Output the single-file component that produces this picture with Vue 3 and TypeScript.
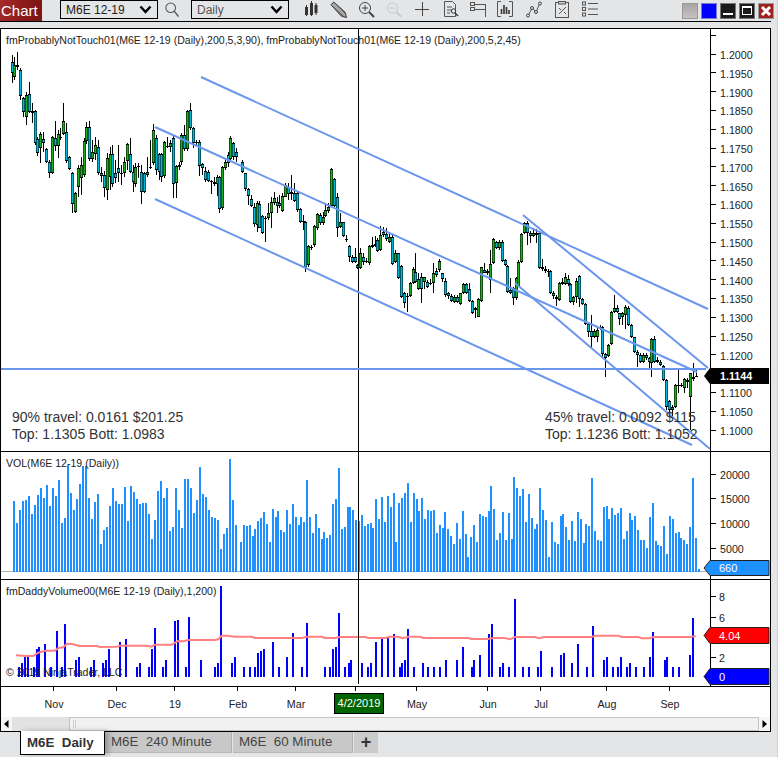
<script setup lang="ts">
type Candle = { x: number; t: number; b: number; c: string; hi: number; lo: number };

const seg1 = "40 35 68 c 15 100,46 45 80 g 22 90,55 46 52 c 5 60,64 60 137 c 55 150,73 145 185 c 140 200,82 135 200 g 125 225,91 132 185 c 95 190,100 182 188 g 160 218,109 182 278 c 180 285,115 268 308 c 260 318,124 252 295 g 245 340,133 268 278 c 245 305,142 298 335 c 295 340,151 335 368 c 330 385,160 262 368 g 258 372,169 265 288 c 213 302,178 252 288 g 240 325,184 262 265 c 235 270,193 213 252 g 158 255,202 247 332 c 220 340,211 320 356 c 318 360,220 370 463 c 365 490,229 430 487 g 425 490,238 355 410 g 345 440,247 345 385 g 320 435,256 272 375 g 265 380,262 230 272 g 215 282,271 232 328 c 212 332,280 305 328 g 270 335,289 285 312 g 260 330,298 292 368 c 270 375,307 368 378 c 352 395,316 375 415 c 362 440,325 325 420 g 310 450,334 313 380 g 290 420,340 313 403 c 285 410,349 368 385 c 330 400,358 355 370 c 285 395,367 370 373 c 345 405,376 337 368 g 320 380,385 283 332 g 280 360,394 313 365 c 265 370,403 365 395 c 345 425,409 350 403 g 340 410,418 347 352 g 340 385,427 365 425 c 345 463,436 370 425 c 365 430,445 367 376 g 320 380,454 350 353 c 270 358,463 240 340 g 222 345,472 265 360 c 255 375,481 313 365 c 310 390,487 313 382 c 310 395,496 277 378 g 272 385,505 288 291 g 260 295,514 280 290 g 270 305,523 265 403 c 255 445,532 348 400 g 345 445,541 345 350 g 335 360,547 255 337 g 250 345,556 255 298 c 225 302,565 183 298 g 180 302,574 180 235 c 160 240,583 235 278 c 232 295,592 275 278 g 270 285,601 275 348 c 270 378,610 343 355 c 340 375,619 362 390 c 352 395,628 365 392 c 360 395,637 393 396 c 390 432,646 395 403 g 380 408,655 380 403 g 375 438,661 380 478 c 378 490,670 350 475 g 348 480,679 335 355 g 325 360,688 315 340 c 305 350,694 265 327 g 258 330,703 280 320 c 275 330,712 305 320 c 295 335";
const seg2 = "9 5 35 c 0 40,18 40 88 c 38 92,27 88 107 c 85 135,36 118 137 c 105 140,45 142 193 c 130 200,54 130 195 g 122 215,60 132 205 c 122 205,69 168 218 c 165 222,78 175 178 g 168 245,87 160 175 g 130 180,96 127 160 g 110 203,105 115 130 g 97 135,114 127 137 c 110 160,120 130 138 c 105 145,129 107 152 g 100 155,138 75 110 g 70 112,147 80 102 c 68 120,156 97 103 g 45 120,165 100 122 c 70 125,174 100 150 c 95 155,183 147 185 c 145 190,192 182 186 g 165 210,198 185 325 c 182 335,207 258 315 g 255 320,216 260 265 g 255 270,225 198 255 g 195 260,234 162 205 g 158 210,243 165 190 c 158 195,252 170 188 g 155 195,258 150 168 g 130 172,267 140 152 g 130 160,276 28 138 g 25 140,285 58 138 c 55 140,294 112 205 c 100 230,303 187 200 g 160 205,312 187 227 c 185 230,321 238 241 c 225 245,330 258 290 c 255 305,339 290 305 c 285 310,348 290 305 c 265 310,354 315 325 c 312 328,363 280 325 g 265 328,372 290 305 c 280 315,381 303 307 g 295 310,390 258 310 g 255 315,399 255 262 g 232 265,408 252 258 g 228 262,414 240 272 c 235 275,423 225 270 g 198 272,432 215 225 c 200 230,441 222 238 c 205 242,450 232 247 g 215 250,459 232 312 c 225 315,468 278 305 g 270 308,477 280 355 c 278 358,486 317 412 c 315 415,495 398 430 c 395 445,504 408 412 c 400 455,513 370 408 g 365 412,522 327 370 g 322 372,528 335 365 c 280 370,537 357 387 g 340 390,546 352 387 c 338 430,555 352 365 g 350 388,564 365 382 c 360 385,573 368 372 g 358 375,582 338 370 g 310 400,591 332 346 c 325 350,600 303 330 g 298 335,609 340 358 c 338 365,618 362 405 c 355 410,627 400 408 c 395 418,636 408 422 c 402 425,645 412 425 g 405 428,654 412 425 c 405 428,663 400 432 g 398 435,672 372 400 g 368 402,681 372 398 c 368 402,690 388 422 c 370 425,699 422 460 c 420 462,708 445 450 c 440 475,717 418 470 g 415 472";
const seg3 = "36 172 272 g 170 275,45 180 188 c 160 190,54 183 190 g 178 195,63 162 210 g 120 248,72 88 160 g 85 162,81 97 115 c 92 118,90 95 115 g 90 120,99 97 152 c 90 155,108 150 165 c 148 168,114 168 245 c 165 248,123 240 248 c 205 252,132 235 265 c 230 285,141 205 265 g 200 270,147 155 228 g 150 232,156 72 155 g 68 158,165 38 68 g 35 72,174 38 70 c 32 105,183 68 78 c 62 100,192 70 78 g 55 82,201 70 75 c 58 100,210 70 175 c 68 178,219 172 178 g 148 182,228 178 182 g 168 190,237 182 185 c 178 200,243 182 250 c 180 252,252 250 258 c 242 268,261 262 268 c 255 288,270 218 270 g 215 272,279 215 222 g 205 225,288 200 222 g 190 225,297 208 222 c 195 228,303 222 275 c 220 278,312 262 275 g 258 285,321 212 262 g 205 280,330 198 268 c 195 290,339 268 282 c 265 285,348 282 342 c 280 345,357 342 365 c 340 380,366 362 382 c 315 410,375 362 382 g 358 385,384 360 382 g 355 395,393 350 355 g 345 360,400 350 432 c 348 445,409 432 445 c 430 500,418 405 437 g 402 440,427 305 403 g 302 405,436 295 305 g 255 310,445 293 305 c 285 308,451 310 327 c 308 345,460 310 320 g 305 345,469 290 315 g 285 358,478 293 345 c 288 348,487 345 382 c 343 385,496 382 425 c 380 428,505 425 435 c 420 472,514 435 455 c 430 458,523 435 455 g 430 460,532 435 445 c 430 450,541 445 455 c 440 475,546 388 460 g 385 500,555 388 455 c 378 458,564 450 455 g 440 458,573 455 465 c 450 468,582 468 510 c 465 512,591 510 590 c 508 600,600 572 600 c 570 618,609 590 600 g 585 620,618 525 592 g 522 595,627 525 528 g 480 548,636 525 528 c 520 532,645 508 533 g 505 548,654 510 515 c 505 535,663 490 560 g 488 660,672 500 507 c 460 512,681 497 500 g 480 500";

function parse(s: string, x0: number, y0: number): Candle[] {
  return s.split(",").map((p) => {
    const [x, t, b, c, hi, lo] = p.split(" ");
    const px = (v: string) => Math.round(y0 + Number(v) / 3);
    return { x: Math.round(x0 + Number(x) / 3) - 1, t: px(t), b: px(b), c, hi: px(hi), lo: px(lo) };
  });
}
const candles: Candle[] = [...parse(seg1, 0, 50), ...parse(seg2, 240, 160), ...parse(seg3, 470, 210)];

const priceTicks = Array.from({ length: 22 }, (_, i) => 34.7 + i * 18.8).map((y) => Math.round(y) + 0.5);
const priceLabels = Array.from({ length: 21 }, (_, i) => ({
  y: Math.round(54 + i * 18.8),
  text: (1.2 - i * 0.005).toFixed(4),
})).filter((p) => p.text !== "1.1150");

const lines = [
  [201, 77, 708, 309],
  [155, 127, 697, 372],
  [155, 199, 692, 445],
  [523, 215, 708, 368],
  [515, 283, 710, 449],
];

const volA = [153,219,180,153,150,138,192,165,135,114,144,105,168,114,138,90,219,204,45,129,180,147,102,48,48,144,207,156,132,282,240,231,168,114,153,162,162,111,213,108,126,147,162,159,159,192,267,210,123,93,144,114,243,231,114,180,234,87,87,114,189,150,51,132,141,180,201,204,210,297,252,234,27,150,225];
const volB = [261,210,213,210,243,222,198,189,171,207,261,162,186,168,225,231,165,207,147,186,210,186,201,75,186,234,177,219,252,231,249,240,147,132,39,222,216,156,156,165,195,198,180,213,207,204,219,132,192,126,201,123,156,114,261,144,129,114,84,201,114,132,168,129,192,165,168,165,234,210,219,171,222,243,267,204,252,168,237,306,246,210,261,177,183,186,168,93,162,255,234,171,255,174,252,66,99,123,102,201,117,189,222,207,99,165,195,306,201,261,267,183,177,216,255,198,258,171,192,264,207,213,69,228,255,258,156,153,192,159,180,174,159,252,228,174,195,183,225,255,255,279,186,144,258,270,273,213,297,183,192,234,231,249,255,267,216,69,249,342];
const volBars = [
  ...volA.map((t, i) => ({ x: 13 + i * 3, y: Math.round(450 + t / 3) })),
  ...volB.map((t, i) => ({ x: Math.round(240 + (i * 457.7) / (volB.length - 1)), y: Math.round(455 + t / 3) })),
];

const dA = "66:250,75:230,84:225,102:260,111:207,117:201,135:192,153:260,171:153,186:260,195:132,228:240,237:231,273:260,282:240,309:250,318:240,327:207,360:186,378:177,411:260,420:249,447:260,456:207,465:144,489:260,498:240,525:123,534:120,558:260,567:111,603:240,645:260,654:249,663:18,696:249,705:231,732:260,750:260,765:260,774:219,783:213,792:207,819:186,837:260,861:231,879:159,906:260,921:129,975:260,990:260,999:207,1008:201,1017:99,1035:260,1047:249,57:260";
const dB = "3:240,36:249,54:260,63:249,78:186,96:177,114:171,132:162,150:260,156:249,165:240,174:147,192:260,219:249,234:260,252:260,270:260,288:240,321:240,339:201,366:260,372:240,390:225,417:162,426:132,450:260,459:249,477:260,495:57,519:260,537:260,564:260,573:213,606:260,633:225,642:219,666:249,684:192,711:260,729:138,762:240,771:231,789:260,804:260,813:231,831:260,840:249,858:260,882:260,900:231,909:156,945:240,951:231,969:260,987:260,1020:225,1029:114";
function bars(s: string, x0: number) {
  return s.split(",").map((p) => {
    const [x, t] = p.split(":").map(Number);
    return { x: Math.round(x0 + x / 3) - 1, y: Math.round(580 + t / 3) };
  });
}
const dailyBars = [...bars(dA, 0), ...bars(dB, 350)];

const maA = "48,226 80,228 100,228 115,218 135,212 165,212 175,204 190,202 200,191 215,192 240,198 290,198 300,201 350,200 360,197 440,197 455,200 465,194 515,194 535,183 550,184 565,180 645,180 655,178 665,167 680,167 705,170 755,170 765,174 905,174 920,170 965,170 975,174 1005,174 1020,171 1050,171";
const maB = "45,171 55,174 105,174 120,170 145,170 158,175 175,170 210,170 220,174 355,174 365,177 415,177 430,174 465,174 480,178 495,171 555,171 567,175 582,171 725,171 735,167 805,167 815,171 865,171 875,175 900,175 910,171 1020,171 1037,168";
function pts(s: string, x0: number): string {
  return s.split(" ").map((p) => {
    const [x, y] = p.split(",").map(Number);
    return `${(x0 + x / 3).toFixed(1)},${(580 + y / 3).toFixed(1)}`;
  }).join(" ");
}
const maLine = pts(maA, 0) + " " + pts(maB, 350);

const months = [
  { x: 53, tx: 54, label: "Nov" },
  { x: 116, tx: 117, label: "Dec" },
  { x: 174, tx: 175, label: "19" },
  { x: 237, tx: 238, label: "Feb" },
  { x: 295, tx: 296, label: "Mar" },
  { x: 355, tx: -100, label: "" },
  { x: 416, tx: 417, label: "May" },
  { x: 487, tx: 488, label: "Jun" },
  { x: 540, tx: 541, label: "Jul" },
  { x: 606, tx: 607, label: "Aug" },
  { x: 669, tx: 670, label: "Sep" },
];
const volTicks = [
  { y: 474, t: "20000" },
  { y: 498, t: "15000" },
  { y: 523, t: "10000" },
  { y: 548, t: "5000" },
];
const dayTicks = [
  { y: 596, t: "8" },
  { y: 617, t: "6" },
  { y: 657, t: "2" },
];
function tag(y1: number, y2: number): string {
  const m = (y1 + y2) / 2;
  return `710,${y1} 769,${y1} 769,${y2} 710,${y2} 704,${m}`;
}
</script>

<template>
  <div class="app">
    <header class="toolbar">
      <div class="chart-tab">Chart</div>
      <div class="combo first"><span>M6E 12-19</span>
        <svg width="13" height="9" viewBox="0 0 13 9"><path d="M1.5 1.5 6.5 7 11.5 1.5" fill="none" stroke="#000" stroke-width="2.4" /></svg>
      </div>
      <svg class="ic search" width="14" height="15" viewBox="0 0 16 17"><circle cx="6.500" cy="6.500" r="5.500" fill="none" stroke="#555" stroke-width="1.200" /><path d="M10.500 10.500l5 6" stroke="#555" stroke-width="1.500" /></svg>
      <div class="combo second"><span>Daily</span>
        <svg width="13" height="9" viewBox="0 0 13 9"><path d="M1.5 1.5 6.5 7 11.5 1.5" fill="none" stroke="#000" stroke-width="2.4" /></svg>
      </div>
      <svg class="ic m15" width="14" height="18" viewBox="0 0 14 18"><path d="M2.500 5v11M7.500 1v15M12 3v12" stroke="#333" stroke-width="1" /><rect x="1" y="7" width="3" height="8" fill="#333" /><rect x="6" y="3" width="3" height="12" fill="#333" /><rect x="10.500" y="5" width="3" height="8" fill="#333" /></svg>
      <svg class="ic m12" width="17" height="17" viewBox="0 0 18 18"><path d="M1 4l3-3 12 11 1.500 5.500-5.500-1.500z" fill="#a8a8a8" stroke="#333" stroke-width="1" /><path d="M3 6l11 10M6 3l10 10" stroke="#444" stroke-width="1" /></svg>
      <svg class="ic m11" width="17" height="17" viewBox="0 0 17 17"><circle cx="7" cy="7" r="5.500" fill="none" stroke="#444" stroke-width="1" /><path d="M4 7h6M7 4v6" stroke="#444" /><path d="M11 11l5 5" stroke="#444" stroke-width="2" /></svg>
      <svg class="ic m11" width="16" height="17" viewBox="0 0 17 17"><circle cx="7" cy="7" r="5.500" fill="none" stroke="#c8c8c8" stroke-width="1" /><path d="M4 7h6" stroke="#c8c8c8" /><path d="M11 11l5 5" stroke="#c8c8c8" stroke-width="2" /></svg>
      <svg class="ic m13" width="14" height="14" viewBox="0 0 14 14"><path d="M7.500 0v14M0 7.500h14" stroke="#444" /></svg>
      <svg class="ic m14" width="16" height="17" viewBox="0 0 16 17"><path d="M1.500.5h8l3 3v12h-11z" fill="none" stroke="#555" /><path d="M4 6h5M4 9h4M4 12h3" stroke="#555" /><circle cx="10.500" cy="10" r="2.200" fill="#e4e5e7" stroke="#333" /><path d="M12 12l3 3" stroke="#333" stroke-width="1.400" /></svg>
      <svg class="ic m11" width="16" height="16" viewBox="0 0 16 16"><path d="M5 3.500h11M5 8.500h11M15.500 3v13" stroke="#555" /><rect x=".5" y="1.500" width="4" height="3" fill="none" stroke="#555" /><rect x=".5" y="6.500" width="4" height="3" fill="none" stroke="#555" /></svg>
      <svg class="ic m11" width="16" height="16" viewBox="0 0 16 16"><path d="M4 .5H.5V15.500H4M12 .5h3.500V15.500H12" fill="none" stroke="#555" /><path d="M4.500 8v5M7 4v9M9.500 6v7M12 9v4" stroke="#333" stroke-width="1.600" /></svg>
      <svg class="ic m13" width="16" height="17" viewBox="0 0 16 17"><path d="M2 15 6 7l4 4 4-9" fill="none" stroke="#555" /><circle cx="2" cy="14.500" r="1.500" fill="#e4e5e7" stroke="#444" /><circle cx="6" cy="7" r="1.500" fill="#e4e5e7" stroke="#444" /><circle cx="10" cy="11" r="1.500" fill="#e4e5e7" stroke="#444" /><circle cx="14" cy="2.500" r="1.500" fill="#e4e5e7" stroke="#444" /></svg>
      <svg class="ic m13" width="15" height="17" viewBox="0 0 15 17"><rect x=".5" y="1.500" width="13" height="15" fill="none" stroke="#555" /><rect x="3.500" y=".5" width="7" height="2.500" fill="#ccc" stroke="#555" /><path d="M4 13 11 6M4 7l2 2M9 11l2 2" stroke="#555" /></svg>
      <svg class="ic m12" width="16" height="16" viewBox="0 0 16 16"><path d="M6 2.500h10M6 8h10M6 13.500h10" stroke="#555" /><rect x=".5" y="1" width="3" height="3" fill="none" stroke="#555" /><rect x=".5" y="6.500" width="3" height="3" fill="none" stroke="#555" /><rect x=".5" y="12" width="3" height="3" fill="none" stroke="#555" /></svg>
      <div class="win">
        <span class="wb gray"></span>
        <span class="wb blue"></span>
        <span class="wb dark"><i class="min"></i></span>
        <span class="wb dark"><i class="max"></i></span>
        <span class="wb red">
          <svg width="12" height="12" viewBox="0 0 12 12"><path d="M2 2l8 8M10 2l-8 8" stroke="#fff" stroke-width="3" /></svg>
        </span>
      </div>
    </header>

    <section class="frame">
      <svg class="pane" width="769" height="422" viewBox="1 29 769 422">
        <line x1="358.500" y1="29" x2="358.500" y2="451" stroke="#000" shape-rendering="crispEdges" />
        <template v-for="(k, i) in candles" :key="i">
          <rect :x="k.x" :y="k.hi" width="1" :height="k.lo - k.hi" fill="#000" />
          <rect :x="k.x - 1" :y="k.t" width="3" :height="Math.max(k.b - k.t, 1)" fill="#000" />
          <rect v-if="k.b - k.t > 2" :x="k.x - 0.5" :y="k.t + 1" width="2" :height="k.b - k.t - 2" :fill="k.c === 'g' ? '#22aa22' : '#00b7d6'" />
        </template>
        <line v-for="(l, i) in lines" :key="i" :x1="l[0]" :y1="l[1]" :x2="l[2]" :y2="l[3]" stroke="#6b96ee" stroke-width="2" />
        <line x1="0" y1="369" x2="706" y2="369" stroke="#6b96ee" stroke-width="2" />
        <text class="small" x="6" y="44">fmProbablyNotTouch01(M6E 12-19 (Daily),200,5,3,90), fmProbablyNotTouch01(M6E 12-19 (Daily),200,5,2,45)</text>
        <text class="big" x="12" y="422">90% travel: 0.0161 $201.25</text>
        <text class="big" x="12" y="439">Top: 1.1305 Bott: 1.0983</text>
        <text class="big" x="545" y="422">45% travel: 0.0092 $115</text>
        <text class="big" x="545" y="439">Top: 1.1236 Bott: 1.1052</text>
        <rect x="710" y="29" width="60" height="422" fill="#fff" />
        <line x1="710.500" y1="29" x2="710.500" y2="451" stroke="#000" shape-rendering="crispEdges" />
        <line v-for="y in priceTicks" :key="y" x1="711" :y1="y" x2="716" :y2="y" stroke="#000" shape-rendering="crispEdges" />
        <text v-for="p in priceLabels" :key="p.text" class="axis" x="720" :y="p.y + 5">{{ p.text }}</text>
        <polygon :points="tag(368, 384)" fill="#000" />
        <text class="tagt" x="720" y="380">1.1144</text>
      </svg>

      <svg class="pane" width="769" height="127" viewBox="1 452 769 127">
        <line x1="0" y1="571.500" x2="710" y2="571.500" stroke="#b4b4b4" shape-rendering="crispEdges" />
        <rect v-for="(b, i) in volBars" :key="i" :x="b.x" :y="b.y" width="2" :height="572 - b.y" fill="#1e90ff" shape-rendering="crispEdges" />
        <line x1="358.500" y1="452" x2="358.500" y2="579" stroke="#000" shape-rendering="crispEdges" />
        <text class="small" x="6" y="467">VOL(M6E 12-19 (Daily))</text>
        <line x1="710.500" y1="452" x2="710.500" y2="579" stroke="#000" shape-rendering="crispEdges" />
        <template v-for="v in volTicks" :key="v.t">
          <line x1="711" :y1="v.y + 0.5" x2="716" :y2="v.y + 0.5" stroke="#000" shape-rendering="crispEdges" />
          <text class="axis" x="720" :y="v.y + 5">{{ v.t }}</text>
        </template>
        <polygon :points="tag(560.500, 575.500)" fill="#1e90ff" stroke="#222" />
        <text class="tagn" x="719" y="572">660</text>
      </svg>

      <svg class="pane" width="769" height="106" viewBox="1 580 769 106">
        <rect v-for="(b, i) in dailyBars" :key="i" :x="b.x" :y="b.y" width="2" :height="677 - b.y" fill="#0000ff" shape-rendering="crispEdges" />
        <polyline :points="maLine" fill="none" stroke="#ff8080" stroke-width="2" />
        <line x1="358.500" y1="580" x2="358.500" y2="684" stroke="#000" shape-rendering="crispEdges" />
        <text class="small" x="6" y="595">fmDaddyVolume00(M6E 12-19 (Daily),1,200)</text>
        <text class="copy" x="6" y="676">© 2019 NinjaTrader, LLC</text>
        <line x1="710.500" y1="580" x2="710.500" y2="686" stroke="#000" shape-rendering="crispEdges" />
        <template v-for="v in dayTicks" :key="v.t">
          <line x1="711" :y1="v.y + 0.5" x2="716" :y2="v.y + 0.5" stroke="#000" shape-rendering="crispEdges" />
          <text class="axis" x="719" :y="v.y + 5">{{ v.t }}</text>
        </template>
        <polygon :points="tag(627.500, 643.500)" fill="#ff0000" stroke="#222" />
        <text class="tagn" x="719" y="640">4.04</text>
        <polygon :points="tag(668.500, 684.500)" fill="#0000ff" stroke="#222" />
        <text class="tagn" x="719" y="681">0</text>
      </svg>

      <svg class="timeaxis" width="769" height="30" viewBox="1 687 769 30">
        <template v-for="m in months" :key="m.x">
          <line :x1="m.x + 0.5" y1="687" :x2="m.x + 0.5" y2="691" stroke="#000" shape-rendering="crispEdges" />
          <text v-if="m.label" class="axis" text-anchor="middle" :x="m.tx" y="708">{{ m.label }}</text>
        </template>
        <rect x="334.500" y="693.500" width="49" height="20" fill="#006400" stroke="#000" />
        <text class="date" x="359" y="707" text-anchor="middle">4/2/2019</text>
      </svg>

      <div class="scroll">
        <div class="arrow">
          <svg width="5" height="8" viewBox="0 0 5 8"><path d="M4.500 0v8L0 4z" fill="#000" /></svg>
        </div>
        <div class="track"></div>
        <div class="thumb"><i></i><i></i></div>
        <div class="arrow">
          <svg width="5" height="8" viewBox="0 0 5 8"><path d="M.5 0v8L5 4z" fill="#000" /></svg>
        </div>
      </div>
    </section>

    <nav class="tabs">
      <div class="tab active">M6E&#160; Daily</div>
      <div class="tab w1">M6E&#160; 240 Minute</div>
      <div class="tab w2">M6E&#160; 60 Minute</div>
      <div class="tab plus">+</div>
    </nav>
  </div>
</template>

<style scoped>
.app {
  width: 778px;
  height: 757px;
  overflow: hidden;
  background: #e4e5e7;
  font-family: "Liberation Sans", Arial, sans-serif;
  display: flex;
  flex-direction: column;
  box-shadow: inset -1px 0 0 #cfcfd2;
}
.toolbar {
  height: 21px;
  flex: none;
  display: flex;
  align-items: center;
  border-bottom: 1px solid #000;
  box-sizing: content-box;
  margin-right: 7px;
}
.chart-tab {
  width: 42px;
  height: 21px;
  line-height: 21px;
  color: #fff;
  font-size: 15px;
  padding-left: 1px;
  box-sizing: border-box;
  background: linear-gradient(100deg, #a52a2a 0%, #8b1a1a 55%, #7a1515 100%);
  flex: none;
}
.combo {
  width: 98px;
  height: 19px;
  box-sizing: border-box;
  border: 1px solid #000;
  display: flex;
  align-items: center;
  justify-content: space-between;
  padding: 0 5px 0 5px;
  font-size: 12px;
  color: #222;
  flex: none;
  margin-bottom: 2px;
}
.combo.first { margin-left: 18px; }
.combo.second { margin-left: 12px; color: #555; }
.ic { flex: none; margin-bottom: 3px; }
.search { margin-left: 7px; }
.m11 { margin-left: 11px; }
.m12 { margin-left: 12px; }
.m13 { margin-left: 13px; }
.m14 { margin-left: 14px; }
.m15 { margin-left: 15px; }
.win {
  margin-left: auto;
  margin-right: -3px;
  display: flex;
  gap: 3px;
}
.wb {
  width: 16px;
  height: 16px;
  display: flex;
  align-items: center;
  justify-content: center;
  box-sizing: border-box;
}
.gray { background: linear-gradient(#a9a5a5, #c5c2c2); border: 1px solid #999; }
.blue { background: #0000ff; border: 1px solid #7a7ad0; }
.dark { background: #1a1a1a; border: 1px solid #777; position: relative; }
.red { background: #a32020; border: 1px solid #999; }
.min { width: 10px; height: 2px; background: #fff; margin-top: 7px; }
.max { width: 10px; height: 9px; border: 1px solid #fff; border-top-width: 2px; box-sizing: border-box; }
.frame {
  margin-top: 6px;
  width: 771px;
  height: 704px;
  flex: none;
  box-sizing: border-box;
  border: 1px solid #000;
  background: #fff;
  display: flex;
  flex-direction: column;
}
.pane {
  display: block;
  flex: none;
  box-sizing: content-box;
  border-bottom: 1px solid #000;
}
.timeaxis { display: block; flex: none; }
.scroll {
  height: 14px;
  flex: none;
  display: flex;
  background: #e2e2e2;
}
.arrow {
  width: 11px;
  flex: none;
  background: #f6f6f6;
  display: flex;
  align-items: center;
  justify-content: center;
}
.track { width: 57px; flex: none; background: #e2e2e2; }
.thumb {
  flex: 1;
  background: #f1f1f1;
  border: 1px solid #c4c4c4;
  box-sizing: border-box;
  display: flex;
  align-items: center;
  gap: 1px;
  padding-left: 3px;
}
.thumb i { width: 1px; height: 8px; background: #cfcfcf; }
.tabs {
  flex: none;
  display: flex;
  align-items: flex-start;
  padding-left: 20px;
  height: 25px;
  margin-top: -1px;
}
.tab {
  box-sizing: border-box;
  height: 21px;
  margin-top: 1px;
  font-size: 13.330px;
  line-height: 20px;
  color: #444;
  background: #c8c8c8;
  border-right: 1px solid #b0b0b0;
  border-bottom: 1px solid #b8b8b8;
  padding-left: 6px;
  white-space: nowrap;
}
.active {
  width: 85px;
  height: 24px;
  margin-top: 0;
  background: #fff;
  border: 1px solid #000;
  border-top: none;
  font-weight: bold;
  color: #333;
  line-height: 24px;
  box-shadow: 4px 0 5px rgba(0, 0, 0, 0.25);
  position: relative;
}
.w1 { width: 127px; padding-left: 6px; }
.w2 { width: 120px; margin-left: 1px; padding-left: 6px; }
.plus {
  width: 24px;
  margin-left: 1px;
  padding: 0;
  border: none;
  text-align: center;
  font-weight: bold;
  font-size: 18px;
  background: #cbcbcb;
  color: #333;
}
.small { font-size: 10.550px; fill: #222; }
.big { font-size: 14px; fill: #333; }
.axis { font-size: 10.700px; fill: #222; }
.copy { font-size: 10.550px; fill: #222; }
.tagt { font-size: 10.700px; font-weight: bold; fill: #fff; }
.tagn { font-size: 11px; fill: #fff; }
.date { font-size: 11px; fill: #fff; }
</style>

<style>
html, body { margin: 0; padding: 0; background: #e4e5e7; }
</style>
